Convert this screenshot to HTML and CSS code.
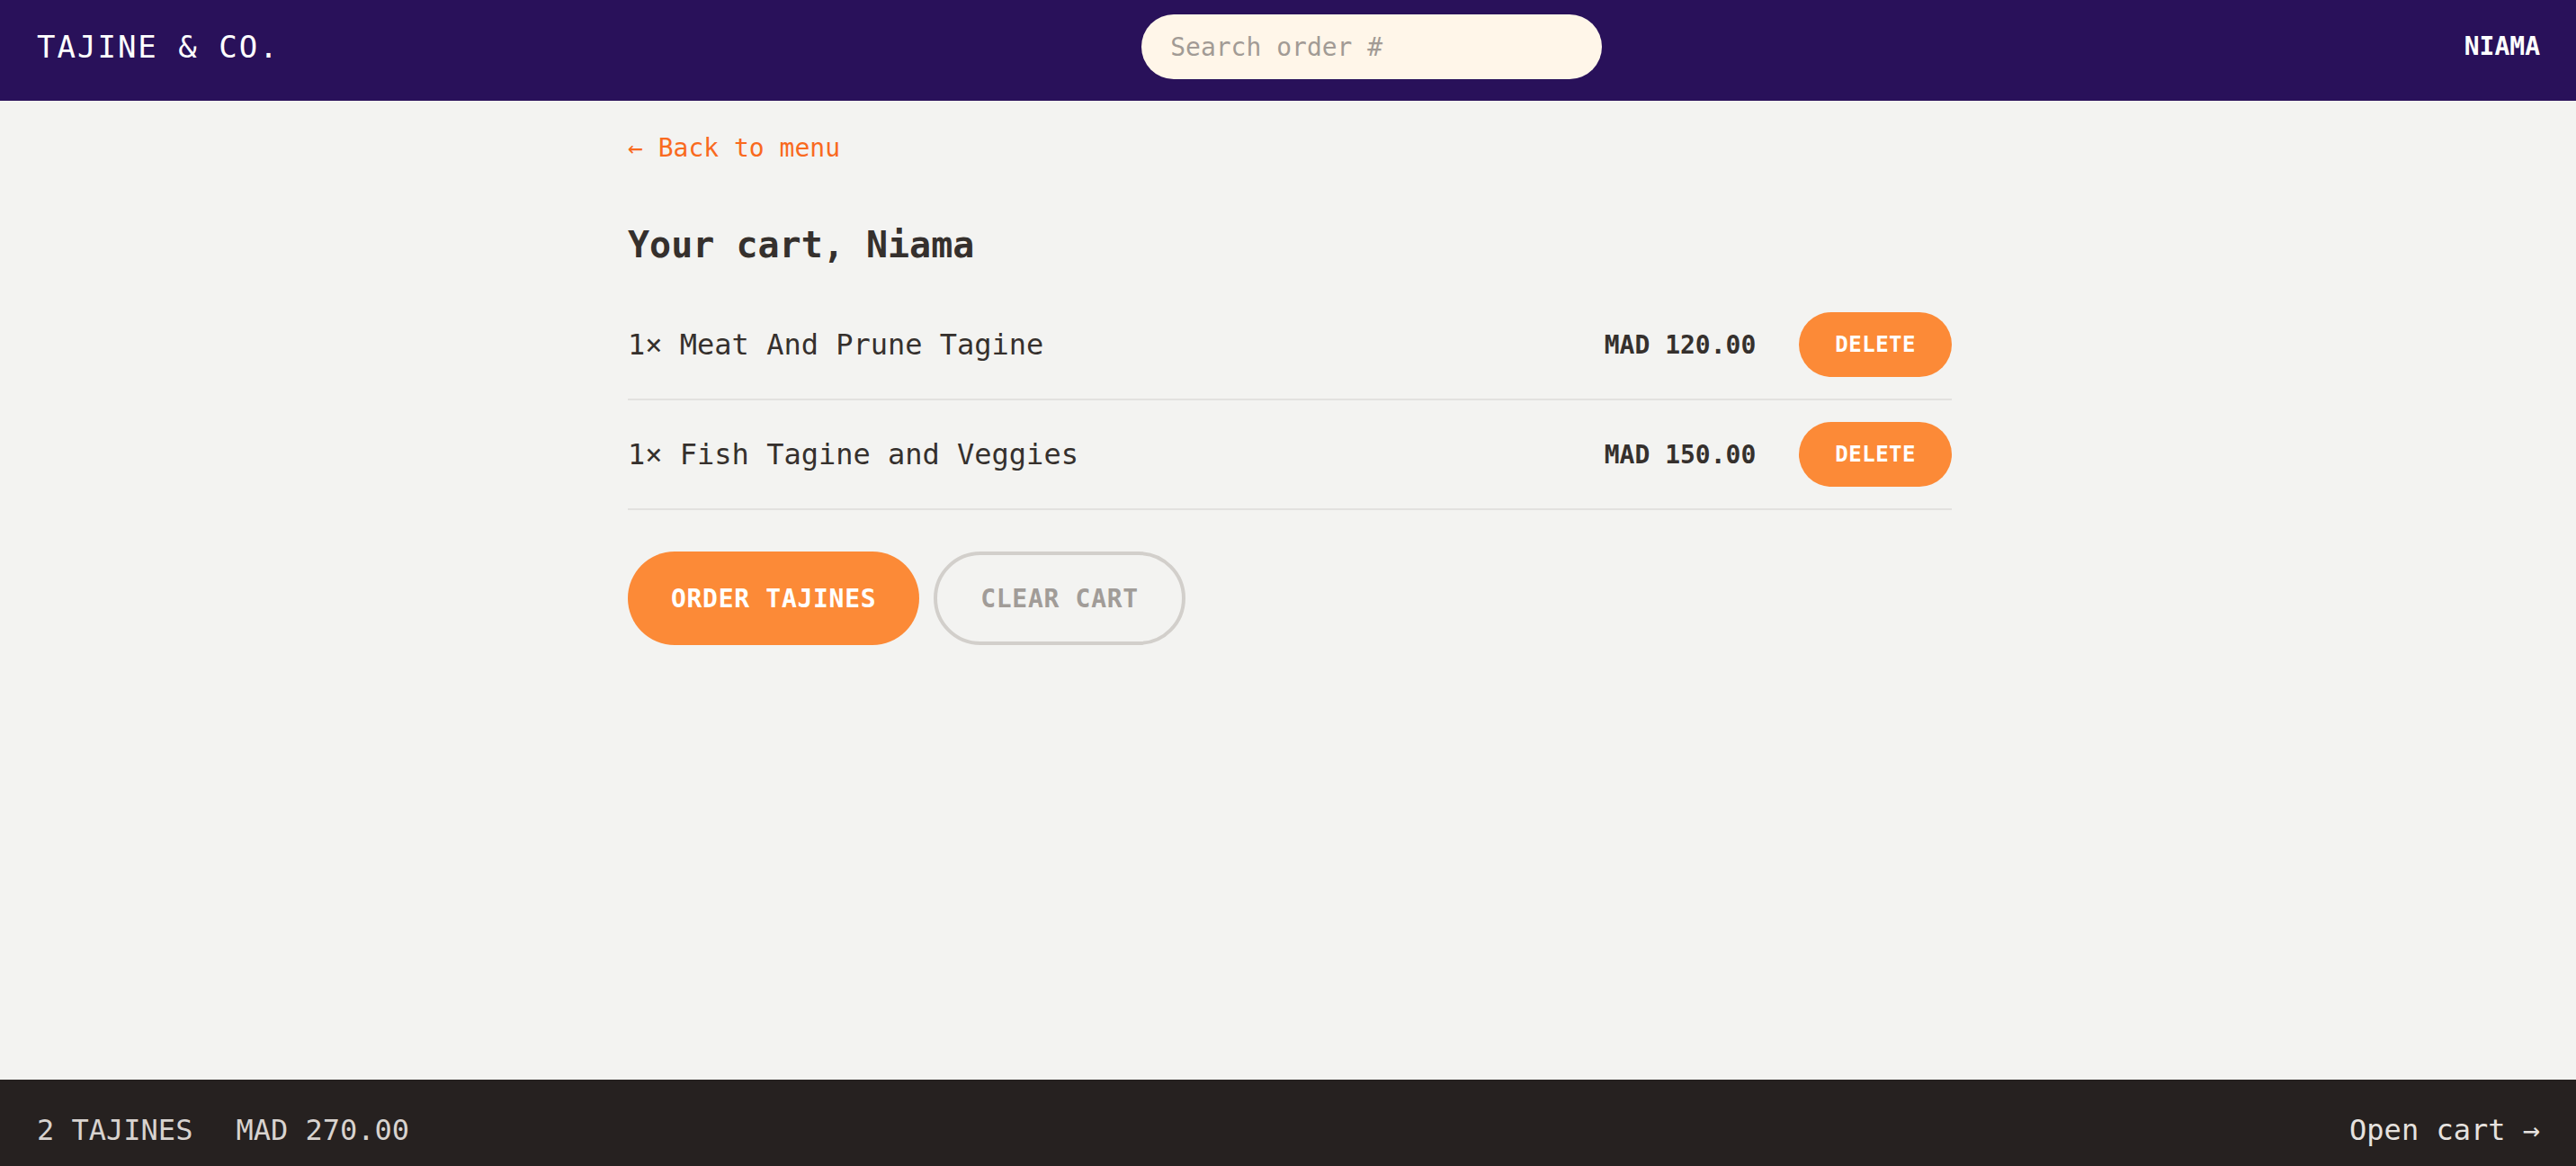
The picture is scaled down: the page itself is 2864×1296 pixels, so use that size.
FILE: index.html
```html
<!DOCTYPE html>
<html lang="en">
<head>
<meta charset="utf-8">
<title>Tajine &amp; Co. — Cart</title>
<link rel="stylesheet" href="styles.css">
</head>
<body>
<header class="topbar">
  <a class="logo" href="#">TAJINE &amp; CO.</a>
  <input class="search" type="text" placeholder="Search order #">
  <span class="username">NIAMA</span>
</header>
<main class="cart">
  <a class="back" href="#">← Back to menu</a>
  <h2 class="cart-title">Your cart, Niama</h2>
  <ul class="items">
    <li class="item">
      <span class="item-name">1× Meat And Prune Tagine</span>
      <span class="item-price">MAD 120.00</span>
      <button class="btn-small">DELETE</button>
    </li>
    <li class="item">
      <span class="item-name">1× Fish Tagine and Veggies</span>
      <span class="item-price">MAD 150.00</span>
      <button class="btn-small">DELETE</button>
    </li>
  </ul>
  <div class="actions">
    <button class="btn-primary">ORDER TAJINES</button>
    <button class="btn-secondary">CLEAR CART</button>
  </div>
</main>
<footer class="cartbar">
  <div class="summary">
    <span>2 TAJINES</span>
    <span>MAD 270.00</span>
  </div>
  <a class="open-cart" href="#">Open cart →</a>
</footer>
</body>
</html>
```
FILE: styles.css
```css
* { box-sizing: border-box; }
html, body { margin: 0; padding: 0; }
body {
  font-family: "DejaVu Sans Mono", "Liberation Mono", monospace;
  background: #f3f3f1;
  color: #35302d;
  min-height: 100vh;
  display: flex;
  flex-direction: column;
}
a { text-decoration: none; }

.topbar {
  background: #29115a;
  height: 112px;
  padding: 16px 40px 24px 41px;
  display: flex;
  align-items: center;
  justify-content: space-between;
}
.logo {
  color: #ffffff;
  font-size: 34px;
  letter-spacing: 2px;
  line-height: 48px;
}
.search {
  width: 512px;
  height: 72px;
  border: none;
  border-radius: 36px;
  background: #fff6e9;
  padding: 0 32px;
  font-family: inherit;
  font-size: 28px;
  color: #35302d;
  outline: none;
}
.search::placeholder { color: #a29b95; }
.username {
  color: #ffffff;
  font-weight: bold;
  font-size: 28px;
  line-height: 42px;
}

.cart {
  flex: 1;
  width: 1476px;
  margin: 0 auto;
  padding: 32px 0 0 4px;
}
.back {
  display: inline-block;
  color: #f96a1e;
  font-size: 28px;
  line-height: 42px;
}
.cart-title {
  margin: 56px 0 21px;
  font-size: 40px;
  line-height: 60px;
  font-weight: bold;
  color: #35302d;
}
.items { list-style: none; margin: 0; padding: 0; }
.item {
  display: flex;
  align-items: center;
  padding: 24px 0;
  border-bottom: 2px solid #e2e1df;
}
.item-name {
  flex: 1;
  font-size: 32px;
  line-height: 48px;
  color: #35302d;
}
.item-price {
  font-size: 28px;
  font-weight: bold;
  margin-right: 48px;
  color: #35302d;
}
.btn-small {
  height: 72px;
  padding: 0 40px;
  border: none;
  border-radius: 36px;
  background: #fc8a37;
  color: #ffffff;
  font-family: inherit;
  font-weight: bold;
  font-size: 24px;
  letter-spacing: 0.5px;
}
.actions {
  display: flex;
  gap: 16px;
  margin-top: 46px;
}
.btn-primary, .btn-secondary {
  height: 104px;
  border-radius: 52px;
  font-family: inherit;
  font-weight: bold;
  font-size: 28px;
  letter-spacing: 0.7px;
}
.btn-primary {
  padding: 0 48px;
  background: #fc8a37;
  border: none;
  color: #ffffff;
}
.btn-secondary {
  padding: 0 48px;
  background: transparent;
  border: 4px solid #d2cfcb;
  color: #a19c98;
}

.cartbar {
  background: #262120;
  height: 96px;
  padding: 32px 40px 0 41px;
  display: flex;
  align-items: flex-start;
  justify-content: space-between;
  color: #d8d3cf;
  font-size: 32px;
  line-height: 48px;
}
.summary { display: flex; gap: 48px; }
.open-cart { color: #e6e2df; }
```
